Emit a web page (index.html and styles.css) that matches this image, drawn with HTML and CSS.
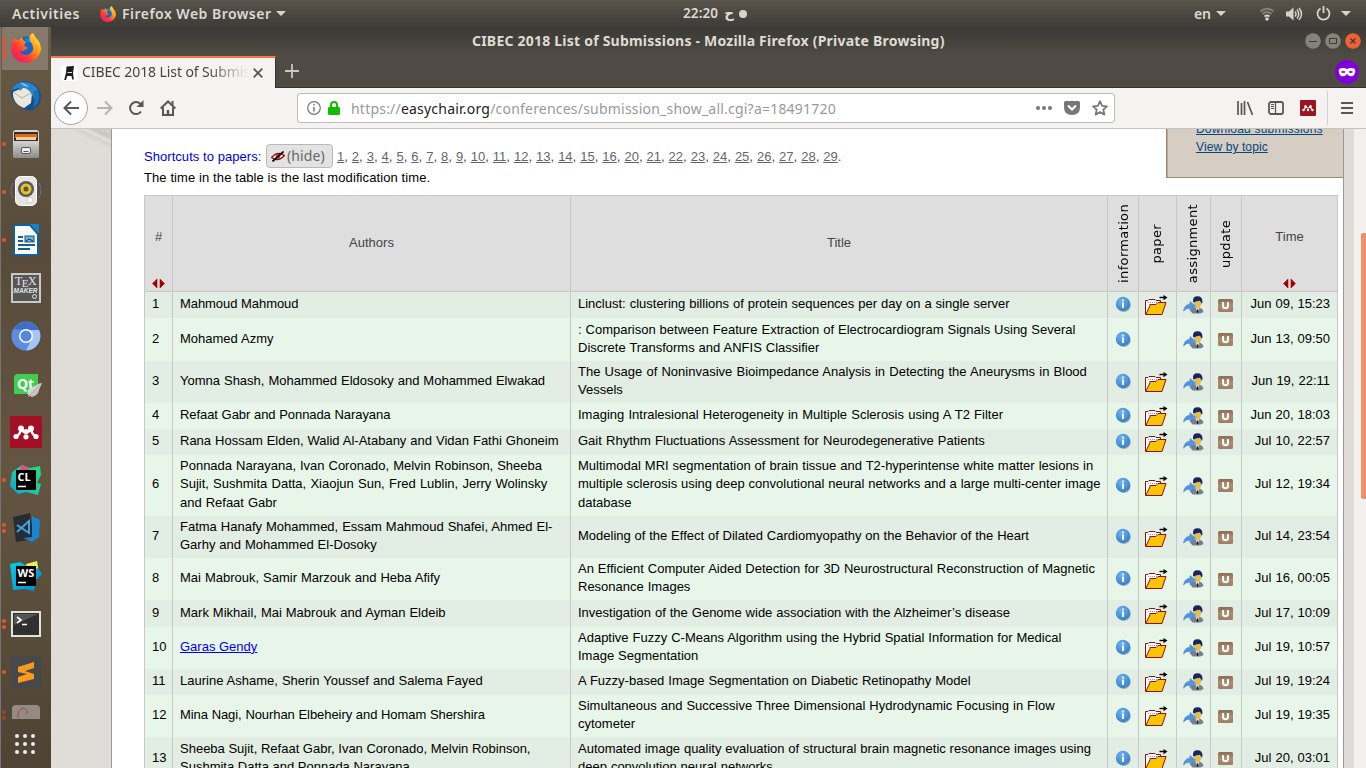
FILE: index.html
```html
<!DOCTYPE html>
<html lang="en">
<head>
<meta charset="utf-8">
<title>CIBEC 2018 List of Submissions</title>
<link rel="stylesheet" href="styles.css">
</head>
<body>
<svg class="defs" width="0" height="0">
<defs>
<radialGradient id="gInfo" cx=".4" cy=".3" r=".8"><stop offset="0" stop-color="#6db3f0"/><stop offset="1" stop-color="#2f78c8"/></radialGradient>
<linearGradient id="gU" x1="0" y1="0" x2="0" y2="1"><stop offset="0" stop-color="#8a6d54"/><stop offset=".5" stop-color="#ab8c70"/><stop offset="1" stop-color="#9d7f65"/></linearGradient>
<linearGradient id="gFox" x1="0.1" y1="1" x2="1" y2=".1"><stop offset="0" stop-color="#e8126e"/><stop offset=".35" stop-color="#ff3a3a"/><stop offset=".65" stop-color="#ff9a0c"/><stop offset="1" stop-color="#fff04a"/></linearGradient>
<linearGradient id="gGray" x1="0" y1="0" x2="0" y2="1"><stop offset="0" stop-color="#d4d4d2"/><stop offset="1" stop-color="#8c8c8a"/></linearGradient>
<linearGradient id="gLeaf" x1="0" y1="0" x2="1" y2="1"><stop offset="0" stop-color="#f2f2f0"/><stop offset="1" stop-color="#a8a8a6"/></linearGradient>
<linearGradient id="gCl" x1="0" y1="1" x2="1" y2="0"><stop offset="0" stop-color="#0aa0d8"/><stop offset=".5" stop-color="#21c9a0"/><stop offset="1" stop-color="#26d780"/></linearGradient>
<linearGradient id="gWs" x1="0" y1="0" x2="1" y2="1"><stop offset="0" stop-color="#00cfe0"/><stop offset="1" stop-color="#0a86d8"/></linearGradient>
</defs>
<symbol id="info" viewBox="0 0 16 17"><circle cx="8.800" cy="9" r="7" fill="#a5b2aa"/><circle cx="8" cy="8" r="7.200" fill="url(#gInfo)"/><rect x="7.100" y="6.500" width="1.900" height="5.500" fill="#fff"/><rect x="7.100" y="3.600" width="1.900" height="1.800" fill="#fff"/></symbol>
<symbol id="paper" viewBox="0 0 23 20"><path d="M.5 19.500V5.500H3L4 4.500h6l1 1h4.500v3" fill="#fff" stroke="#901010"/><path d="M3 7.500h10M4 9.500h2" stroke="#99a" stroke-dasharray="1 1"/><path d="M.8 19.500 5.500 9.500h5.500l2-2h8L17 19.500z" fill="#f8c404" stroke="#901010"/><path d="M14.500 2.500h6" stroke="#000" stroke-width="1.400"/><path d="M18.500 0 22.500 2.500 18.500 5.200z"/></symbol>
<symbol id="assign" viewBox="0 0 21 18"><path d="M7.500 15Q9 11 13.500 11q6.500.5 7 5l-3 1.500h-8z" fill="#76808f"/><path d="m12.500 11.500 2 5 2-5z" fill="#e4eaf4"/><path d="m14.500 12.500-1 3 1 2 1-2z" fill="#222"/><path d="M10.500 5h8q0 7-4 7.500Q11 12 10.500 5z" fill="#e3be50"/><path d="M10 5.500Q9.500.3 14.500.3q5 0 5 5.700l-.8 2q-.5-2.500-2-3.300-3 .3-6.200 1.800z" fill="#1b2460"/><path d="M.5 15Q1.500 8.500 7 8V5.500l5.500 4.500L7 14.800v-2.600Q3 12 .5 15z" fill="#5394e2" stroke="#3f7fca" stroke-width=".5"/></symbol>
<symbol id="update" viewBox="0 0 15 13"><rect width="15" height="13" rx="1.500" fill="url(#gU)"/><path d="M5.100 3v4q0 2.200 2.400 2.200T9.900 7V3" fill="none" stroke="#fff" stroke-width="2"/></symbol>
<symbol id="sort" viewBox="0 0 13 9"><path d="M5 0v9L.5 4.500zM8 0v9l4.500-4.500z" fill="#a40000" stroke="#a40000" stroke-width=".6"/></symbol>
<symbol id="fox" viewBox="0 0 30 30"><circle cx="15" cy="15.500" r="12" fill="#1565c8"/><path d="M14 5q7-1 9 8-3-4-8-4z" fill="#0d86e8"/><path d="M3 5q-4 8-2.500 14Q4 30 15 30q12-1 15-13Q30 9 25 5l-3-5q-5 2-3 8 4 4 3 9-2 5-8 5-4-.5-5-4 3 1 5-1l3-2q-3-1-4-3l2-3Q12 8 11 4L7 7z" fill="url(#gFox)"/></symbol>
<symbol id="down" viewBox="0 0 10 5"><path d="M0 0h10L5 5z" fill="#d5d3cd"/></symbol>
</svg>

<div class="topbar">
  <span class="activities">Activities</span>
  <svg class="top-fox" width="16" height="16"><use href="#fox"/></svg>
  <span class="app-name">Firefox Web Browser</span>
  <svg class="caret" width="10" height="5"><use href="#down"/></svg>
  <span class="clock"><span>22:20</span><span class="day">ح</span><i class="dot"></i></span>
  <span class="lang">en</span>
  <svg class="caret lang-caret" width="10" height="5"><use href="#down"/></svg>
  <svg class="wifi" width="16" height="14" viewBox="0 0 16 14" fill="none" stroke-width="1.800"><path d="M1.500 4.500q6.500-5.500 13 0M3.500 7q4.500-4 9 0" stroke="#85827b"/><path d="M5.500 9.500q2.500-2 5 0" stroke="#d5d3cd"/><circle cx="8" cy="12" r="1.800" fill="#d5d3cd"/></svg>
  <svg class="vol" width="17" height="14" viewBox="0 0 17 14" fill="none" stroke="#d5d3cd" stroke-width="1.500"><path d="M0 4.500h3L7.500.5v13L3 9.500H0z" fill="#d5d3cd" stroke="none"/><path d="M9 4.500q2 2.500 0 5M11 2.500q3.500 4.500 0 9M13 1q5 6 0 12"/></svg>
  <svg class="power" width="15" height="15" viewBox="0 0 15 15" fill="none" stroke="#d5d3cd" stroke-width="1.800"><path d="M4.500 2.500a6 6 0 1 0 6 0M7.500 0v7"/></svg>
  <svg class="caret" width="10" height="5"><use href="#down"/></svg>
</div>

<div class="desktop">
<nav class="dock">
  <div class="app active"><i class="run r4"></i><svg width="30" height="30"><use href="#fox"/></svg></div>
  <div class="app"><svg width="32" height="32" viewBox="0 0 32 32"><path d="M4 5Q14-2 24 4q7 5 7 13-1 10-9 13-6 1-10-2Q0 20 1 12z" fill="#124f8f"/><path d="m3 12 12-5 7 6-1 10-7 5Q2 23 3 12z" fill="#ebe7dc"/><path d="m3 12 9 6 9-5" fill="none" stroke="#b9b4a6"/><path d="M2 10Q4 3 12 2q11-1 16 8l-4 2 1 8-4-7q-3-5-8-5l-3 3-1-3z" fill="#2b82c6"/><path d="M27 9q4 6 1 14l-6 6q4-7 2-14z" fill="#1f6fb5"/><path d="M10 3q6 0 9 4l-5-1z" fill="#7cc0ea"/></svg></div>
  <div class="app"><i class="run"></i><svg width="28" height="30" viewBox="0 0 28 30"><rect x="1" y="1" width="26" height="28" rx="3" fill="#d6d6d3"/><rect x="2" y="3" width="24" height="9" fill="#303030"/><path d="M3 5h22v4H3z" fill="#e56717"/><path d="M4 8h20v3H4z" fill="#f6d2a0"/><rect x="1" y="12" width="26" height="17" rx="2" fill="url(#gGray)"/><rect x="9.500" y="18.500" width="9" height="6" rx="1.500" fill="#eee" stroke="#555"/><path d="M11.500 22.500h5" stroke="#555"/></svg></div>
  <div class="app up"><i class="run"></i><svg width="32" height="32" viewBox="0 0 32 32"><path d="M3 8q-4 7 0 15M29 8q4 7 0 15" fill="none" stroke="#557b9c"/><rect x="5.500" y="1.500" width="21" height="29" rx="5" fill="#e5e5e3" stroke="#fff"/><circle cx="16" cy="14" r="8" fill="#59595a"/><circle cx="16" cy="14" r="5.500" fill="#e7c520"/><circle cx="16" cy="14" r="2.500" fill="#555"/><circle cx="20" cy="25" r="3" fill="#f5f5f5" stroke="#ccc"/></svg></div>
  <div class="app"><i class="run"></i><svg width="28" height="32" viewBox="0 0 28 32"><path d="M2 1h16l8 9v21H2z" fill="#f6fafc" stroke="#0f6299" stroke-width="2"/><path d="M18 0h9v10z" fill="#1883c0"/><path d="M6 13h5M6 17h5M6 21h17M6 25h12" stroke="#1b5b88" stroke-width="2"/><rect x="13" y="12" width="9" height="6" fill="#78b4dc" stroke="#155581"/><path d="m14 17 3-2 4 2" fill="none" stroke="#124"/></svg></div>
  <div class="app"><div class="tex"><span class="tex-a">T<sub>E</sub>X</span><span class="tex-b">MAKER</span><i class="tex-dot"></i></div></div>
  <div class="app"><svg width="30" height="30" viewBox="0 0 30 30"><circle cx="15" cy="15" r="14.500" fill="#5c8de0"/><path d="M2.500 8A14.500 14.500 0 0 1 28 9H15z" fill="#3f6fc5"/><path d="M28 9a14.500 14.500 0 0 1-13 20.500l6-12Q22 12 18 9z" fill="#a9c5f6"/><circle cx="15" cy="15" r="7" fill="#fff"/><circle cx="15" cy="15" r="5.500" fill="#5587df"/></svg></div>
  <div class="app"><div class="qt">Qt<svg class="leaf" width="17" height="15" viewBox="0 0 17 15"><path d="M17 0Q14 0 10 3 0 6 3 12l4 2q7-2 7-7z" fill="url(#gLeaf)"/><path d="M3 14 15 2" stroke="#aaa"/></svg></div></div>
  <div class="app"><svg width="32" height="32" viewBox="0 0 32 32"><rect width="32" height="32" fill="#a31026"/><path d="M6 20.500q4.500-2 5-8.500 2 4.500 5 4.500t5-4.500q.5 6.500 5 8.500" stroke="#fff" stroke-width="2.600" fill="none" stroke-linejoin="round"/><g fill="#fff"><circle cx="11" cy="12.500" r="3"/><circle cx="21" cy="12.500" r="3"/><circle cx="16" cy="15.500" r="2.500"/><circle cx="6" cy="20.500" r="2.600"/><circle cx="16" cy="20.800" r="2.600"/><circle cx="26" cy="20.500" r="2.600"/></g></svg></div>
  <div class="app"><i class="run"></i><div class="jb"><svg width="32" height="32" viewBox="0 0 32 32"><path d="M2 8 12 1l8 3 10-2 1 9-4 8 4 1-3 11-12-3-8 2-8-8z" fill="url(#gCl)"/><path d="m11 1 8 3-2 5-7-1z" fill="#e04a90"/><rect x="6" y="6" width="20" height="20"/><path d="M8 22.500h8" stroke="#fff" stroke-width="1.500"/></svg><b>CL</b></div></div>
  <div class="app"><i class="run r2"></i><svg width="30" height="30" viewBox="0 0 30 30"><path d="m2 4 17-4 4 26-18 3z" fill="#282b30"/><path d="m21 3 8 4-1 17-7 5-9-4 9-1z" fill="#1885cf"/><path d="m6 12 12 8V8L6 19" fill="none" stroke="#3ba3e8" stroke-width="2"/></svg></div>
  <div class="app"><div class="jb"><svg width="32" height="32" viewBox="0 0 32 32"><path d="m0 4 10-2 7 4 10-5 2 9 3 4-6 6-2 11-10-2-11 1z" fill="url(#gWs)"/><path d="m16 4 11-3 1 7-10 4z" fill="#f5ea4a"/><rect x="6" y="6" width="20" height="20"/><path d="M8 22.500h8" stroke="#fff" stroke-width="1.500"/></svg><b>WS</b></div></div>
  <div class="app"><i class="run r2"></i><svg width="30" height="26" viewBox="0 0 30 26"><rect x="1" y="1" width="28" height="24" fill="#303030" stroke="#e2e2e0" stroke-width="2"/><path d="M3 3h24L3 14z" fill="#555"/><path d="m6 6 4 3-4 3M11 13.500h5" fill="none" stroke="#fff" stroke-width="1.600"/></svg></div>
  <div class="app"><i class="run"></i><svg width="32" height="32" viewBox="0 0 32 32"><rect width="32" height="32" rx="2" fill="#484848"/><path d="m8 11 16-5v6l-9 3 9 3v5L8 27v-6l9-3-9-2z" fill="#fa9a20"/></svg></div>
  <div class="app last"><i class="run r2 dim"></i><svg width="28" height="14" viewBox="0 0 28 14"><path d="M0 14V4q0-4 4-4h20q4 0 4 4v10z" fill="#938b81"/><path d="M6 13q-1-8 5-10 5 1 4 6" fill="none" stroke="#a5493c"/></svg></div>
  <svg class="grid9" width="20" height="20" viewBox="0 0 20 20" fill="#eee"><circle cx="2" cy="2" r="2"/><circle cx="10" cy="2" r="2"/><circle cx="18" cy="2" r="2"/><circle cx="2" cy="10" r="2"/><circle cx="10" cy="10" r="2"/><circle cx="18" cy="10" r="2"/><circle cx="2" cy="18" r="2"/><circle cx="10" cy="18" r="2"/><circle cx="18" cy="18" r="2"/></svg>
</nav>

<main class="window">
  <header class="titlebar">
    <span class="win-title">CIBEC 2018 List of Submissions - Mozilla Firefox (Private Browsing)</span>
    <span class="win-buttons">
      <svg width="16" height="16" viewBox="0 0 16 16"><circle cx="8" cy="8" r="7.800" fill="#84827b"/><path d="M4 8.500h8" stroke="#3c3b37"/></svg>
      <svg width="16" height="16" viewBox="0 0 16 16"><circle cx="8" cy="8" r="7.800" fill="#84827b"/><rect x="4.500" y="5.500" width="7" height="5" fill="none" stroke="#3c3b37"/></svg>
      <svg width="16" height="16" viewBox="0 0 16 16"><circle cx="8" cy="8" r="7.800" fill="#ee6135"/><path d="m5.500 5.500 5 5M10.500 5.500l-5 5" stroke="#3c3b37" stroke-width="1.400"/></svg>
    </span>
  </header>
  <div class="tabs">
    <div class="tab">
      <svg width="16" height="16" viewBox="0 0 16 16"><rect width="16" height="16" rx="2" fill="#fff"/><path d="M5.500 1.500 13 1l-1 7 .8 6.500h-1.600L10.500 11H6.200L5 15H3.200L5 8z" fill="#1c1c1c"/><path d="M6.500 7.500h4.500" stroke="#ddd"/></svg>
      <span class="tab-title">CIBEC 2018 List of Submissions</span>
      <svg class="tab-x" width="10" height="10" viewBox="0 0 10 10"><path d="m.7.7 8.600 8.600M9.300.7.7 9.300" stroke="#555" stroke-width="1.700"/></svg>
    </div>
    <svg class="plus" width="14" height="14" viewBox="0 0 14 14"><path d="M7 0v14M0 7h14" stroke="#c9c7c2" stroke-width="1.800"/></svg>
    <svg class="mask" width="24" height="24" viewBox="0 0 24 24"><circle cx="12" cy="12" r="12" fill="#8000d7"/><path d="M4 9q4-2 8 0 4-2 8 0 1 4-2 7-4 1-6-2-2 3-6 2-3-3-2-7z" fill="#fff"/><path d="M6.500 12q2-1.500 3.500 0-1.500 1.200-3.500 0zM17.500 12q-2-1.500-3.500 0 1.500 1.200 3.500 0z" fill="#8000d7" stroke="#8000d7" stroke-width=".8"/></svg>
  </div>
  <div class="navbar">
    <span class="back"><svg width="17" height="16" viewBox="0 0 17 16" fill="none" stroke="#585858" stroke-width="2"><path d="M1.500 8H16M8 1.500 1.500 8 8 14.500"/></svg></span>
    <svg class="fwd" width="17" height="16" viewBox="0 0 17 16" fill="none" stroke="#b5b4b2" stroke-width="2"><path d="M1 8h14.500M9 1.500 15.500 8 9 14.500"/></svg>
    <svg class="reload" width="16" height="16" viewBox="0 0 16 16"><path d="M13 11.500A6 6 0 1 1 12.500 4" fill="none" stroke="#585858" stroke-width="2"/><path d="M15.500 0v7h-7z" fill="#585858"/></svg>
    <svg class="home" width="16" height="16" viewBox="0 0 16 16" fill="none" stroke="#585858" stroke-width="2"><path d="m.7 8.500 7.300-7 7.300 7M3 7.500V15h10V7.500"/><path d="M8 15v-5" stroke-width="2.500"/><path d="M12.500 1v4"/></svg>
    <div class="urlbar">
      <svg width="14" height="14" viewBox="0 0 14 14" fill="none" stroke="#777"><circle cx="7" cy="7" r="6.300" stroke-width="1.200"/><path d="M7 6v4.500M7 3v1.500" stroke-width="1.500"/></svg>
      <svg class="lock" width="12" height="14" viewBox="0 0 12 14"><path d="M3 7V4q0-3 3-3t3 3v3" fill="none" stroke="#12bc00" stroke-width="2"/><rect y="6" width="12" height="8" rx="1.200" fill="#12bc00"/></svg>
      <span class="url">https://<em>easychair.org</em>/conferences/submission_show_all.cgi?a=18491720</span>
      <svg class="dots" width="16" height="4" viewBox="0 0 16 4" fill="#777"><circle cx="2" cy="2" r="2"/><circle cx="8" cy="2" r="2"/><circle cx="14" cy="2" r="2"/></svg>
      <svg class="pocket" width="16" height="14" viewBox="0 0 16 14"><path d="M1.500 0h13Q16 0 16 1.500V6q0 8-8 8T0 6V1.500Q0 0 1.500 0z" fill="#777"/><path d="m4 4.500 4 4 4-4" fill="none" stroke="#fff" stroke-width="2"/></svg>
      <svg class="star" width="16" height="16" viewBox="0 0 16 16"><path d="m8 1.200 2.100 4.600 4.900.5-3.700 3.300 1.100 5L8 12.100l-4.400 2.500 1.100-5L1 6.300l4.900-.5z" fill="none" stroke="#777" stroke-width="1.800" stroke-linejoin="round"/></svg>
    </div>
    <svg class="lib" width="16" height="14" viewBox="0 0 16 14" stroke="#585858" stroke-width="1.700"><path d="M1 0v14M4.500 2v12M7.500 0v14M10.500 1l5 13"/></svg>
    <svg class="side" width="16" height="14" viewBox="0 0 16 14" fill="none" stroke="#585858"><rect x="1" y="1" width="14" height="12" rx="2" stroke-width="1.800"/><path d="M7.500 1v12" stroke-width="1.300"/><path d="M3 3.500h3M3 5.500h3M3 7.500h3"/></svg>
    <svg class="mend" width="16" height="16" viewBox="0 0 16 16"><rect width="16" height="16" rx="1" fill="#9b1420"/><path d="M3.500 10q2-1 2-3.500Q6.500 8 8 8t2.500-1.500q0 2.500 2 3.500" fill="none" stroke="#fff" stroke-width="1.100"/><g fill="#fff"><circle cx="5.500" cy="6.500" r="1.300"/><circle cx="10.500" cy="6.500" r="1.300"/><circle cx="3.500" cy="10" r="1.200"/><circle cx="8" cy="10" r="1.200"/><circle cx="12.500" cy="10" r="1.200"/></g></svg>
    <i class="sep"></i>
    <svg class="burger" width="12" height="12" viewBox="0 0 12 12" stroke="#585858" stroke-width="2"><path d="M0 1h12M0 6h12M0 11h12"/></svg>
  </div>

  <div class="viewport">
    <aside class="gutter"></aside>
    <section class="page">
      <div class="intro">
        <div class="intro-text">
          <p class="shortcuts"><span class="s-label">Shortcuts to papers:</span><span class="hide-btn"><svg width="14" height="11" viewBox="0 0 14 11" fill="none"><path d="M.6 6.500Q6.500-.5 13.400 4.500 7 11.500.6 6.500z" stroke="#a40000" stroke-width="1.200"/><circle cx="7" cy="5.300" r="1.700" stroke="#a40000"/><path d="M1.500 10.500 12.500.5" stroke="#000" stroke-width="1.700"/></svg>(hide)</span><span class="nums"><a>1</a>, <a>2</a>, <a>3</a>, <a>4</a>, <a>5</a>, <a>6</a>, <a>7</a>, <a>8</a>, <a>9</a>, <a>10</a>, <a>11</a>, <a>12</a>, <a>13</a>, <a>14</a>, <a>15</a>, <a>16</a>, <a>20</a>, <a>21</a>, <a>22</a>, <a>23</a>, <a>24</a>, <a>25</a>, <a>26</a>, <a>27</a>, <a>28</a>, <a>29</a>.</span></p>
          <p class="note">The time in the table is the last modification time.</p>
        </div>
        <div class="menu"><a>Download submissions</a><a>View by topic</a></div>
      </div>
      <table>
        <colgroup><col class="c1"><col class="c2"><col class="c3"><col class="c4"><col class="c5"><col class="c6"><col class="c7"><col class="c8"></colgroup>
        <thead><tr>
          <th class="sorted"><span>#</span><svg width="13" height="9"><use href="#sort"/></svg></th><th>Authors</th><th>Title</th>
          <th class="v first"><span>information</span></th><th class="v"><span>paper</span></th><th class="v"><span>assignment</span></th><th class="v"><span>update</span></th>
          <th class="sorted"><span>Time</span><svg width="13" height="9"><use href="#sort"/></svg></th>
        </tr></thead>
        <tbody>
        <tr class="h26"><td>1</td><td class="tight">Mahmoud Mahmoud</td><td>Linclust: clustering billions of protein sequences per day on a single server</td><td class="i n"><svg width="16" height="17"><use href="#info"/></svg></td><td class="i"><svg width="23" height="20"><use href="#paper"/></svg></td><td class="i p"><svg width="21" height="18"><use href="#assign"/></svg></td><td class="i"><svg width="15" height="13"><use href="#update"/></svg></td><td class="t">Jun 09, 15:23</td></tr>
        <tr class="h43"><td>2</td><td>Mohamed Azmy</td><td>: Comparison between Feature Extraction of Electrocardiogram Signals Using Several<br>Discrete Transforms and ANFIS Classifier</td><td class="i n"><svg width="16" height="17"><use href="#info"/></svg></td><td class="i"></td><td class="i p"><svg width="21" height="18"><use href="#assign"/></svg></td><td class="i"><svg width="15" height="13"><use href="#update"/></svg></td><td class="t">Jun 13, 09:50</td></tr>
        <tr class="h42"><td>3</td><td>Yomna Shash, Mohammed Eldosoky and Mohammed Elwakad</td><td><span class="wide">The Usage of Noninvasive Bioimpedance Analysis in Detecting the Aneurysms in Blood</span><br>Vessels</td><td class="i n"><svg width="16" height="17"><use href="#info"/></svg></td><td class="i"><svg width="23" height="20"><use href="#paper"/></svg></td><td class="i p"><svg width="21" height="18"><use href="#assign"/></svg></td><td class="i"><svg width="15" height="13"><use href="#update"/></svg></td><td class="t">Jun 19, 22:11</td></tr>
        <tr class="h26"><td>4</td><td class="tight">Refaat Gabr and Ponnada Narayana</td><td class="wide">Imaging Intralesional Heterogeneity in Multiple Sclerosis using A T2 Filter</td><td class="i n"><svg width="16" height="17"><use href="#info"/></svg></td><td class="i"><svg width="23" height="20"><use href="#paper"/></svg></td><td class="i p"><svg width="21" height="18"><use href="#assign"/></svg></td><td class="i"><svg width="15" height="13"><use href="#update"/></svg></td><td class="t">Jun 20, 18:03</td></tr>
        <tr class="h26"><td>5</td><td>Rana Hossam Elden, Walid Al-Atabany and Vidan Fathi Ghoneim</td><td class="wide">Gait Rhythm Fluctuations Assessment for Neurodegenerative Patients</td><td class="i n"><svg width="16" height="17"><use href="#info"/></svg></td><td class="i"><svg width="23" height="20"><use href="#paper"/></svg></td><td class="i p"><svg width="21" height="18"><use href="#assign"/></svg></td><td class="i"><svg width="15" height="13"><use href="#update"/></svg></td><td class="t">Jul 10, 22:57</td></tr>
        <tr class="h61"><td>6</td><td>Ponnada Narayana, Ivan Coronado, Melvin Robinson, Sheeba<br><span class="wide">Sujit, Sushmita Datta, Xiaojun Sun, Fred Lublin, Jerry Wolinsky</span><br>and Refaat Gabr</td><td>Multimodal MRI segmentation of brain tissue and T2-hyperintense white matter lesions in<br><span class="some">multiple sclerosis using deep convolutional neural networks and a large multi-center image</span><br>database</td><td class="i n"><svg width="16" height="17"><use href="#info"/></svg></td><td class="i"><svg width="23" height="20"><use href="#paper"/></svg></td><td class="i p"><svg width="21" height="18"><use href="#assign"/></svg></td><td class="i"><svg width="15" height="13"><use href="#update"/></svg></td><td class="t">Jul 12, 19:34</td></tr>
        <tr class="h42"><td>7</td><td>Fatma Hanafy Mohammed, Essam Mahmoud Shafei, Ahmed El-<br>Garhy and Mohammed El-Dosoky</td><td><span class="some">Modeling of the Effect of Dilated Cardiomyopathy on the Behavior of the Heart</span></td><td class="i n"><svg width="16" height="17"><use href="#info"/></svg></td><td class="i"><svg width="23" height="20"><use href="#paper"/></svg></td><td class="i p"><svg width="21" height="18"><use href="#assign"/></svg></td><td class="i"><svg width="15" height="13"><use href="#update"/></svg></td><td class="t">Jul 14, 23:54</td></tr>
        <tr class="h42"><td>8</td><td>Mai Mabrouk, Samir Marzouk and Heba Afify</td><td>An Efficient Computer Aided Detection for 3D Neurostructural Reconstruction of Magnetic<br>Resonance Images</td><td class="i n"><svg width="16" height="17"><use href="#info"/></svg></td><td class="i"><svg width="23" height="20"><use href="#paper"/></svg></td><td class="i p"><svg width="21" height="18"><use href="#assign"/></svg></td><td class="i"><svg width="15" height="13"><use href="#update"/></svg></td><td class="t">Jul 16, 00:05</td></tr>
        <tr class="h27"><td>9</td><td>Mark Mikhail, Mai Mabrouk and Ayman Eldeib</td><td>Investigation of the Genome wide association with the Alzheimer’s disease</td><td class="i n"><svg width="16" height="17"><use href="#info"/></svg></td><td class="i"><svg width="23" height="20"><use href="#paper"/></svg></td><td class="i p"><svg width="21" height="18"><use href="#assign"/></svg></td><td class="i"><svg width="15" height="13"><use href="#update"/></svg></td><td class="t">Jul 17, 10:09</td></tr>
        <tr class="h42"><td>10</td><td><a>Garas Gendy</a></td><td>Adaptive Fuzzy C-Means Algorithm using the Hybrid Spatial Information for Medical<br>Image Segmentation</td><td class="i n"><svg width="16" height="17"><use href="#info"/></svg></td><td class="i"><svg width="23" height="20"><use href="#paper"/></svg></td><td class="i p"><svg width="21" height="18"><use href="#assign"/></svg></td><td class="i"><svg width="15" height="13"><use href="#update"/></svg></td><td class="t">Jul 19, 10:57</td></tr>
        <tr class="h26"><td>11</td><td>Laurine Ashame, Sherin Youssef and Salema Fayed</td><td>A Fuzzy-based Image Segmentation on Diabetic Retinopathy Model</td><td class="i n"><svg width="16" height="17"><use href="#info"/></svg></td><td class="i"><svg width="23" height="20"><use href="#paper"/></svg></td><td class="i p"><svg width="21" height="18"><use href="#assign"/></svg></td><td class="i"><svg width="15" height="13"><use href="#update"/></svg></td><td class="t">Jul 19, 19:24</td></tr>
        <tr class="h42"><td>12</td><td class="tight">Mina Nagi, Nourhan Elbeheiry and Homam Shershira</td><td>Simultaneous and Successive Three Dimensional Hydrodynamic Focusing in Flow<br>cytometer</td><td class="i n"><svg width="16" height="17"><use href="#info"/></svg></td><td class="i"><svg width="23" height="20"><use href="#paper"/></svg></td><td class="i p"><svg width="21" height="18"><use href="#assign"/></svg></td><td class="i"><svg width="15" height="13"><use href="#update"/></svg></td><td class="t">Jul 19, 19:35</td></tr>
        <tr class="h43"><td>13</td><td><span class="plain">Sheeba Sujit, Refaat Gabr, Ivan Coronado, Melvin Robinson,</span><br><span class="plain">Sushmita Datta and Ponnada Narayana</span></td><td><span class="some">Automated image quality evaluation of structural brain magnetic resonance images using</span><br>deep convolution neural networks</td><td class="i n"><svg width="16" height="17"><use href="#info"/></svg></td><td class="i"><svg width="23" height="20"><use href="#paper"/></svg></td><td class="i p"><svg width="21" height="18"><use href="#assign"/></svg></td><td class="i"><svg width="15" height="13"><use href="#update"/></svg></td><td class="t">Jul 20, 03:01</td></tr>
        </tbody>
      </table>
    </section>
    <div class="gutter-right"></div>
    <div class="scrollbar"><i class="thumb"></i></div>
  </div>
</main>
</div>
</body>
</html>
```
FILE: styles.css
```css
* { box-sizing: border-box; }
body { margin: 0; width: 1366px; height: 768px; overflow: hidden; display: flex; flex-direction: column; font-family: "Noto Sans", sans-serif; }
svg { display: block; flex: none; }
.defs { position: absolute; }
p { margin: 0; }

/* System panel */
.topbar { position: relative; flex: none; height: 27px; display: flex; align-items: center; padding: 0 15px 0 12px; color: #dcdad4; font-weight: 600; font-size: 14px; line-height: 27px; white-space: nowrap; background: linear-gradient(#58544b, #3e3c38); }
.activities { width: 88px; letter-spacing: .55px; }
.app-name { margin-left: 6px; width: 149px; letter-spacing: .48px; }
.caret { margin-left: 5px; }
.clock { position: absolute; left: 683px; top: 0; display: flex; align-items: center; font-size: 13.500px; letter-spacing: .1px; }
.day { font-family: "DejaVu Sans", sans-serif; margin-left: 6px; }
.dot { width: 8px; height: 8px; border-radius: 50%; background: #d5d3cd; margin-left: 5px; }
.lang { margin-left: auto; }
.wifi { margin-left: 33px; }
.vol { margin-left: 11px; }
.power { margin-left: 13px; margin-right: 5px; }

.desktop { flex: 1; display: flex; min-height: 0; }

/* Launcher */
.dock { flex: none; width: 51px; background: linear-gradient(#695a47, #594b3b 30%, #635540 60%, #4e4334); border-left: 1px solid #77746d; overflow: hidden; }
.app { position: relative; height: 48px; display: flex; align-items: center; justify-content: center; padding-right: 1px; }
.app:first-child { height: 45px; padding-bottom: 3px; }
.up { padding-bottom: 2px; }
.active { background: linear-gradient(#84796b, #84796b) 1px 0 / 46px 43px no-repeat; border-radius: 4px; }
.run { position: absolute; left: 1px; top: 22px; width: 4px; height: 4px; border-radius: 50%; background: #e95420; }
.r2 { top: 19px; box-shadow: 0 6px #e95420; }
.r4 { top: 10px; box-shadow: 0 6px #e95420, 0 12px #e95420, 0 18px #e95420; }
.dim { top: 14px; opacity: .45; }
.last { height: 38px; align-items: flex-start; padding-top: 9px; }
.grid9 { margin: 0 0 0 14px; }
.tex { position: relative; width: 30px; height: 30px; border: 2px solid #c9c9c6; background: #565656; color: #e4e4e4; display: flex; flex-direction: column; align-items: center; }
.tex-a { font: 12px/13px "Liberation Serif", serif; letter-spacing: -.6px; height: 12px; }
.tex-a sub { font-size: 11px; line-height: 0; vertical-align: -2px; }
.tex-b { font: italic bold 6.500px/7px "Liberation Sans", sans-serif; }
.tex-dot { position: absolute; right: 2px; bottom: 2px; width: 5px; height: 5px; border: 1.500px solid #e4e4e4; border-radius: 50%; }
.qt { position: relative; width: 24px; height: 20px; border-radius: 4px 0 4px 0; background: #41cd52; color: #fff; font: bold 14px/19px "Open Sans", sans-serif; text-align: center; }
.leaf { position: absolute; left: 11px; top: 9px; }
.jb { position: relative; }
.jb b { position: absolute; left: 8px; top: 6px; color: #fff; font: bold 11px/13px "Open Sans", sans-serif; }

/* Browser chrome */
.window { flex: 1; min-width: 0; display: flex; flex-direction: column; }
.titlebar { flex: none; height: 29px; display: flex; align-items: center; justify-content: flex-end; padding: 0 5px 1px 0; background: linear-gradient(#3a3935, #4f4b44); color: #dfdbd2; font-size: 14px; font-weight: 700; }
.win-title { width: 473px; white-space: nowrap; margin-right: 360px; padding-bottom: 1px; letter-spacing: .22px; }
.win-buttons { display: flex; gap: 4px; }
.tabs { flex: none; height: 32px; display: flex; background: #4f4b44; border-bottom: 1px solid #35332f; }
.tab { width: 225px; height: 32px; border-top: 2px solid #f07746; border-right: 1px solid #35332f; background: #f4f3f2; display: flex; align-items: center; padding: 0 0 0 10px; font-size: 14px; color: #444; }
.tab-title { width: 166px; margin: -3px 0 0 5px; overflow: hidden; white-space: nowrap; letter-spacing: -.1px; -webkit-mask-image: linear-gradient(90deg, #000 125px, transparent 167px); mask-image: linear-gradient(90deg, #000 125px, transparent 167px); }
.tab-x { margin-left: 5px; }
.plus { margin: 8px 0 0 9px; }
.mask { margin: 4px 7px 0 auto; }
.navbar { flex: none; height: 41px; display: flex; align-items: center; background: #f4f3f2; border-bottom: 1px solid #c6c4c1; padding-left: 3px; }
.back { width: 34px; height: 34px; border: 1px solid #a6a5a3; border-radius: 50%; background: #fdfdfd; display: flex; align-items: center; justify-content: center; }
.fwd { margin-left: 8px; }
.reload { margin-left: 15px; }
.home { margin-left: 16px; }
.urlbar { width: 818px; height: 30px; margin-left: 121px; border: 1px solid #bfbdba; border-radius: 3px; background: #fff; display: flex; align-items: center; padding-left: 9px; }
.lock { margin-left: 7px; }
.url { width: 685px; margin-left: 11px; color: #999; font-size: 14px; letter-spacing: .21px; white-space: nowrap; }
.url em { font-style: normal; color: #222; }
.pocket { margin-left: 12px; }
.star { margin-left: 12px; }
.lib { margin-left: 122px; }
.side { margin-left: 15px; }
.mend { margin-left: 16px; }
.sep { width: 1px; height: 34px; background: #d4d2d0; margin-left: 11px; }
.burger { margin-left: 13px; }

/* Page */
.viewport { flex: 1; min-height: 0; display: flex; overflow: hidden; font: 13px/18.200px "Liberation Sans", Arial, sans-serif; color: #000; }
.gutter { flex: none; width: 61px; background: linear-gradient(25deg, transparent 0 60%, #d6d2cc 70%, #e4e1dc 76%, #cac6c0 82%, #d8d4ce) 0 0 / 61px 25px no-repeat #e0dcd7; border-right: 1px solid #999; }
.page { flex: none; width: 1231px; background: #fff; }
.intro { height: 66px; display: flex; justify-content: space-between; align-items: flex-start; }
.intro-text { padding: 15px 0 0 32px; white-space: nowrap; }
.shortcuts { display: flex; align-items: center; height: 24px; color: #00d; }
.s-label { width: 122px; padding-top: 2px; letter-spacing: .05px; }
.hide-btn { width: 67px; height: 24px; border: 1px solid #b9b9b9; border-radius: 4px; background: #e3e3e3; color: #666; display: flex; align-items: center; gap: 2px; padding-left: 4px; font: 14px/22px "Noto Sans", sans-serif; letter-spacing: .1px; }
.nums { margin-left: 4px; padding-top: 2px; color: #33f; word-spacing: .4px; }
.nums a { color: #666; text-decoration: underline; }
.note { padding-top: 1px; letter-spacing: .1px; }
.menu { width: 177px; height: 49px; background: #d6cdc3; border-left: 1px solid #9b8b74; border-bottom: 1px solid #9b8b74; box-shadow: inset 1px 0 #b5a898; padding: 0 0 0 29px; font-size: 12px; line-height: 18px; overflow: hidden; }
.menu a { display: block; color: #05477f; text-decoration: underline; white-space: nowrap; letter-spacing: .2px; }
.menu a:first-child { margin-top: -9px; }
.menu a:last-child { letter-spacing: .1px; }

table { margin-left: 32px; width: 1194px; table-layout: fixed; border-collapse: separate; border-spacing: 0; border-right: 1px solid #c8c8c8; }
.c1 { width: 28px; } .c2 { width: 398px; } .c3 { width: 537px; } .c4 { width: 31px; }
.c5 { width: 38px; } .c6 { width: 34px; } .c7 { width: 31px; } .c8 { width: 96px; }
th { height: 97px; padding: 0; font-weight: 400; color: #444; background: #dedede; border: solid #c8c8c8; border-width: 1px 0 1px 1px; }
.sorted { padding-bottom: 3px; }
.sorted span { display: block; padding: 32px 0 33px; line-height: 18px; }
.sorted svg { margin: 0 auto; }
.v { padding: 6px 2px 0 0; }
.first { padding-right: 0; }
.v span { writing-mode: vertical-rl; transform: rotate(180deg); display: inline-block; font: 13px/15px "DejaVu Sans", sans-serif; color: #000; letter-spacing: .35px; }
td { padding: 0 0 2px 7px; border-left: 1px solid #c8c8c8; vertical-align: middle; white-space: nowrap; word-spacing: .35px; }
td a { color: #00e; text-decoration: underline; word-spacing: 0; }
.tight { letter-spacing: -.07px; word-spacing: .2px; }
.plain { word-spacing: 0; }
.some { word-spacing: .2px; }
.wide { word-spacing: .6px; }
tbody tr { background: #e8f6ea; }
tbody tr:nth-child(odd) { background: #e2ede3; }
.h43 td, .h27 td { padding-bottom: 1px; }
tbody .i { padding: 0 2px 0 0; }
tbody .n { padding: 0 0 1px; }
tbody .p { padding: 0; }
.i svg { margin: 0 auto; }
.t { padding-left: 0; padding-right: 7px; text-align: right; }
.h26 { height: 26px; } .h27 { height: 27px; } .h42 { height: 42px; } .h43 { height: 43px; } .h61 { height: 61px; }
.gutter-right { flex: none; width: 11px; border-left: 1px solid #999; background: #dfdbd6; }
.scrollbar { flex: 1; background: #f2f1f0; padding: 104px 0 0 7px; }
.thumb { display: block; width: 5px; height: 266px; background: #f08f69; border-radius: 2px 0 0 2px; }
```
